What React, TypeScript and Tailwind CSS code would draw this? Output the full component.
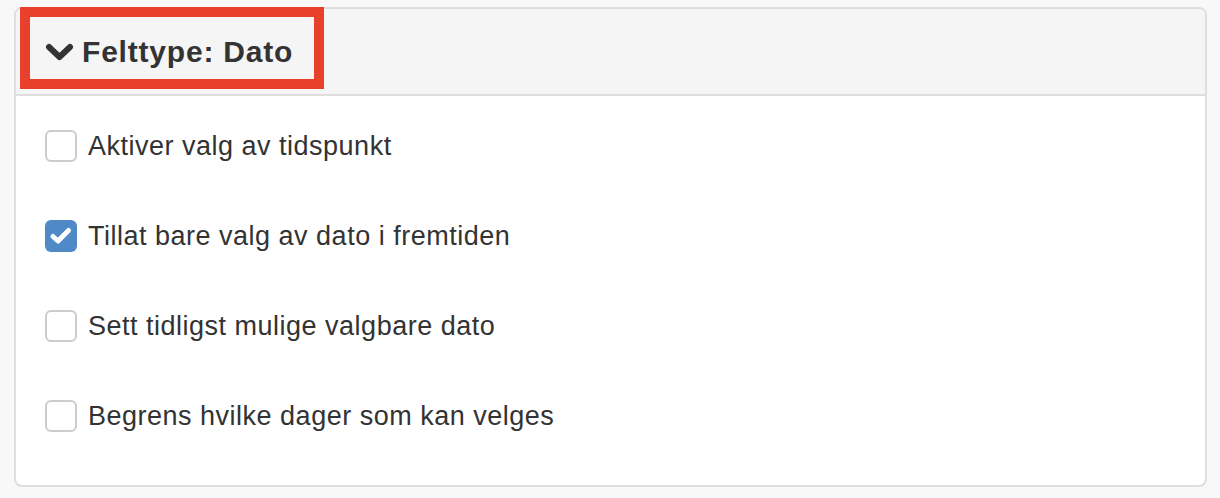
const OPTIONS = [
  { label: "Aktiver valg av tidspunkt", checked: false },
  { label: "Tillat bare valg av dato i fremtiden", checked: true },
  { label: "Sett tidligst mulige valgbare dato", checked: false },
  { label: "Begrens hvilke dager som kan velges", checked: false },
];

export default function App() {
  return (
    <div
      className="min-h-[498px] w-full bg-[#f8f8f8] pt-[7px] pl-[14px] pr-[13px]"
      style={{ fontFamily: "'Liberation Sans', Arial, sans-serif" }}
    >
      <div className="relative w-[1193px] h-[480px] rounded-[8px] border-2 border-[#dedede] bg-white">
        {/* Header */}
        <div className="h-[87px] rounded-t-[6px] bg-[#f5f5f5] border-b-2 border-[#dedede] flex items-center pl-[29px]">
          <svg width="29" height="18" viewBox="0 0 29 18" className="mr-[8px]">
            <polyline
              points="4,4 14.5,14 25,4"
              fill="none"
              stroke="#333"
              strokeWidth="6"
              strokeLinecap="round"
              strokeLinejoin="round"
            />
          </svg>
          <span className="text-[30px] font-bold text-[#333] tracking-[0.8px]">Felttype: Dato</span>
        </div>

        {/* Annotation box */}
        <div className="absolute left-[4px] top-[-2px] w-[304px] h-[82px] border-[10px] border-[#e8402a]" />

        {/* Options */}
        <div className="pt-[5px] pl-[29px]">
          {OPTIONS.map((o, i) => (
            <div key={i} className="h-[90px] flex items-center gap-[11px]">
              {o.checked ? (
                <div className="w-[32px] h-[32px] rounded-[6px] bg-[#4f89c8]">
                  <svg width="32" height="32" viewBox="0 0 32 32">
                    <polyline
                      points="8,16.5 13,21 23.5,10.5"
                      fill="none"
                      stroke="#fff"
                      strokeWidth="5"
                      strokeLinecap="round"
                      strokeLinejoin="round"
                    />
                  </svg>
                </div>
              ) : (
                <div className="w-[32px] h-[32px] rounded-[6px] border-2 border-[#cccccc] bg-white" />
              )}
              <span className="text-[27px] text-[#333] tracking-[0.5px]">{o.label}</span>
            </div>
          ))}
        </div>
      </div>
    </div>
  );
}
